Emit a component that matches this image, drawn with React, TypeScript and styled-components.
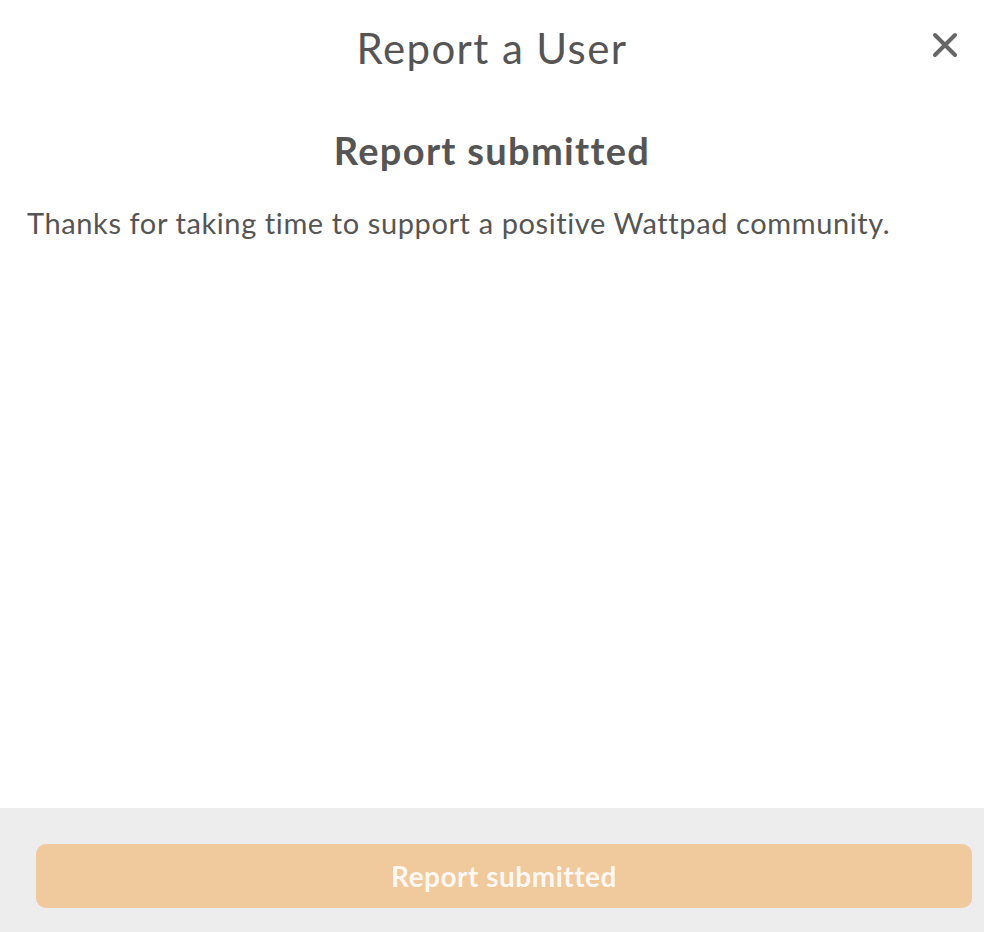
import React from "react";
import styled, { createGlobalStyle } from "styled-components";

const Global = createGlobalStyle`
  html, body { margin: 0; padding: 0; background: #fff; }
  body { font-family: "Lato", "Open Sans", sans-serif; color: #545454; }
`;

const Modal = styled.div`
  width: 984px;
  height: 932px;
  display: flex;
  flex-direction: column;
  background: #fff;
`;

const Header = styled.header`
  position: relative;
  display: flex;
  justify-content: center;
  align-items: center;
  height: 96px;
`;

const Title = styled.h1`
  margin: 0;
  font-size: 42px;
  line-height: 52px;
  letter-spacing: 1.4px;
  font-weight: 400;
  color: #555;
`;

const CloseButton = styled.button`
  position: absolute;
  right: 21px;
  top: 27px;
  width: 36px;
  height: 36px;
  border: 0;
  background: transparent;
  padding: 0;
  cursor: pointer;
  display: flex;
  align-items: center;
  justify-content: center;
`;

const Body = styled.main`
  flex: 1;
  padding: 30px 27px 0;
`;

const Heading = styled.h2`
  margin: 0 0 29px;
  text-align: center;
  font-size: 38px;
  line-height: 48px;
  letter-spacing: 1.3px;
  font-weight: 700;
  color: #555;
`;

const Text = styled.p`
  margin: 0;
  font-size: 29px;
  line-height: 40px;
  letter-spacing: 0.6px;
  color: #555;
`;

const Footer = styled.footer`
  background: #ededed;
  height: 124px;
  padding: 36px 12px 0 36px;
  box-sizing: border-box;
`;

const SubmitButton = styled.button`
  width: 936px;
  height: 64px;
  border: 0;
  border-radius: 10px;
  background: #f0c99d;
  color: rgba(255, 255, 255, 0.9);
  font-family: "Lato", "Open Sans", sans-serif;
  font-size: 28px;
  letter-spacing: 0.5px;
  font-weight: 700;
`;

export default function App() {
  return (
    <>
      <Global />
      <Modal>
        <Header>
          <Title>Report a User</Title>
          <CloseButton aria-label="Close">
            <svg width="26" height="26" viewBox="0 0 26 26">
              <path d="M3 3 L23 23 M23 3 L3 23" stroke="#666" strokeWidth="4" strokeLinecap="round" />
            </svg>
          </CloseButton>
        </Header>
        <Body>
          <Heading>Report submitted</Heading>
          <Text>Thanks for taking time to support a positive Wattpad community.</Text>
        </Body>
        <Footer>
          <SubmitButton disabled>Report submitted</SubmitButton>
        </Footer>
      </Modal>
    </>
  );
}
